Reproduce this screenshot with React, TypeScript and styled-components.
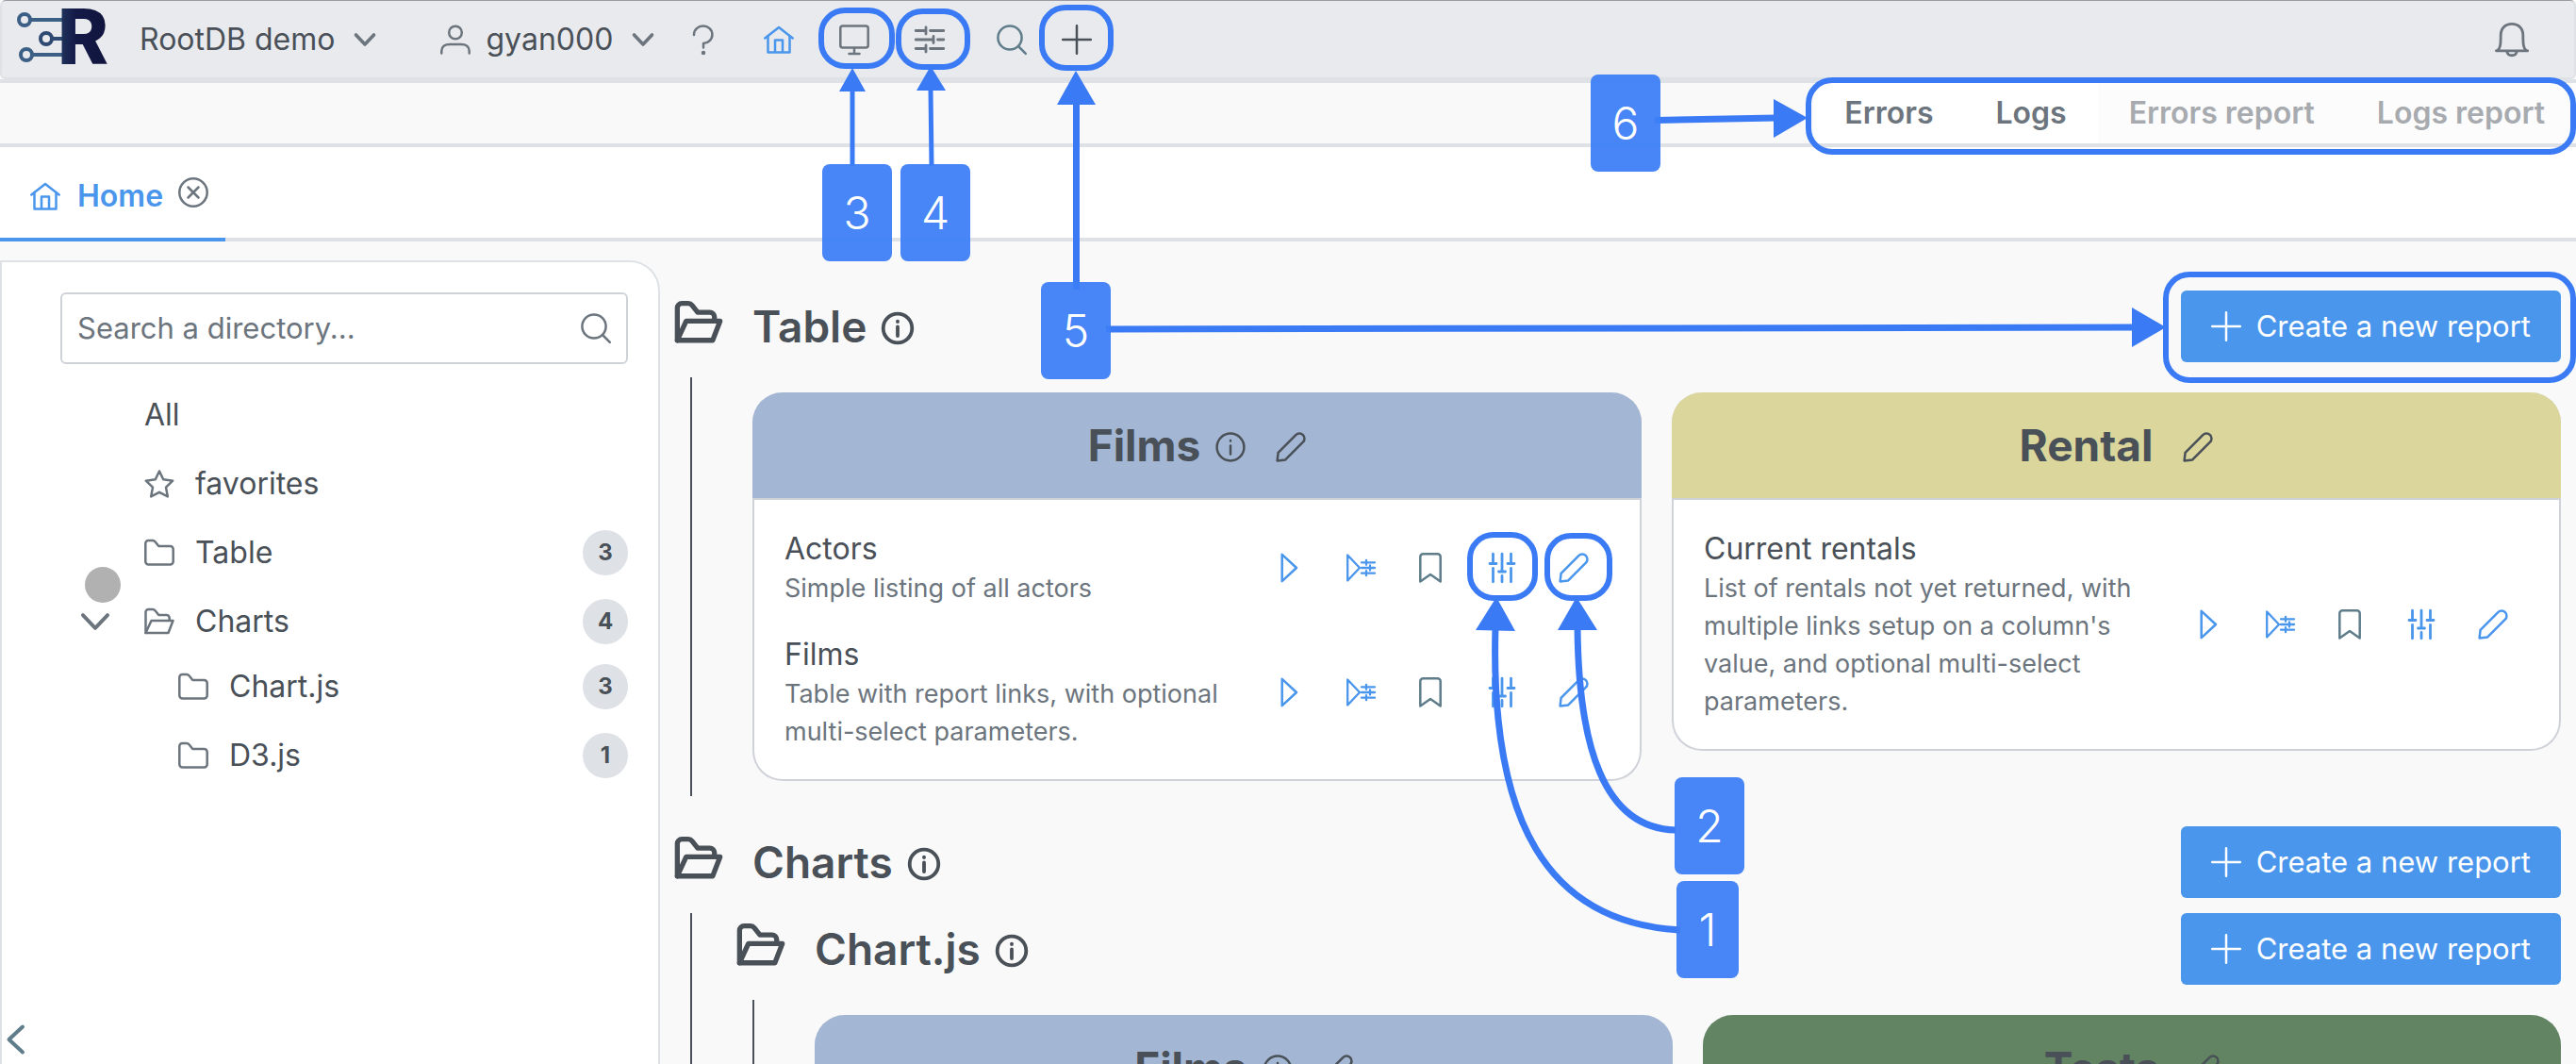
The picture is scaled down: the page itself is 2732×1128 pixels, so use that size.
import React from "react";
import styled, { createGlobalStyle, css } from "styled-components";

const color = {
  text: "#495057",
  muted: "#6c757d",
  line: "#dee2e6",
  cardLine: "#d0d2d9",
  page: "#f9f9f9",
  header: "#e9eaee",
  primary: "#4a96ec",
  note: "#3a7bf5",
  slate: "#607d8b",
};

const GlobalStyle = createGlobalStyle`
  * { box-sizing: border-box; }
  body {
    margin: 0;
    background: ${color.page};
    color: ${color.text};
    font-family: Inter, "Liberation Sans", sans-serif;
    font-size: 32px;
    line-height: 40px;
  }
  button, input { font: inherit; color: inherit; }
  button { background: none; border: 0; padding: 0; cursor: pointer; }
  ul { list-style: none; margin: 0; padding: 0; }
  h2, h3, h4, p { margin: 0; font-weight: inherit; font-size: inherit; }
`;

/* ---------- icons ---------- */

const shapes = {
  chevronDown: <path d="M6.5 11 L16 21 L25.5 11" />,
  chevronLeft: <path d="M22 2.5 L7.5 16 L22 29.5" />,
  user: (
    <>
      <circle cx="16" cy="8.5" r="6.8" />
      <path d="M1.3 30.5 V28 C1.3 23.5 4.8 21 10 21 H22 C27.2 21 30.7 23.5 30.7 28 V30.5" />
    </>
  ),
  help: (
    <>
      <path d="M6 11 V10.5 A9.7 9.3 0 1 1 16 20 V24.5" />
      <circle cx="16" cy="30" r="1" fill="currentColor" />
    </>
  ),
  home: (
    <>
      <path d="M1.3 14.5 L16 3 L30.7 14.5" />
      <path d="M4.5 12.5 V29.5 H27.5 V12.5" />
      <path d="M12 29 V16.5 H20 V29" />
    </>
  ),
  monitor: (
    <>
      <rect x="1.3" y="1.5" width="29.4" height="23" rx="2.5" />
      <path d="M16 25 V31 M10.5 31 H21.5" />
    </>
  ),
  slidersH: (
    <path d="M1.2 6.5 H12 M12 3 V10 M16.5 6.5 H30.8 M1.2 16 H20 M20 12.5 V19.5 M24.5 16 H30.8 M1.2 25.5 H12 M12 22 V29 M16.5 25.5 H30.8" />
  ),
  slidersV: (
    <path d="M6.5 1.2 V11.5 M3 11.5 H10 M6.5 16.5 V30.8 M16 1.2 V20 M12.5 20 H19.5 M16 24.5 V30.8 M25.5 1.2 V11.5 M22 11.5 H29 M25.5 16.5 V30.8" />
  ),
  search: (
    <>
      <circle cx="14" cy="14" r="12.6" />
      <path d="M23 23 L30.8 30.8" />
    </>
  ),
  plus: <path d="M16 1.2 V30.8 M1.2 16 H30.8" />,
  bell: (
    <>
      <path d="M1.2 26.5 C5.5 25.5 5.5 19 5.5 12 C5.5 5.5 9.5 1.2 16 1.2 C22.5 1.2 26.5 5.5 26.5 12 C26.5 19 26.5 25.5 30.8 26.5 Z" />
      <path d="M11.5 27.5 C12 32 20 32 20.5 27.5" />
    </>
  ),
  close: (
    <>
      <circle cx="16" cy="16" r="14.7" />
      <path d="M10.5 10.5 L21.5 21.5 M21.5 10.5 L10.5 21.5" />
    </>
  ),
  star: (
    <path d="M16 2.5 L20.2 11.3 L30.2 12.7 L23 19.6 L24.8 29.4 L16 24.8 L7.2 29.4 L9 19.6 L1.8 12.7 L11.8 11.3 Z" />
  ),
  folder: (
    <path d="M1.3 25.3 V6 A3 3 0 0 1 4.3 3 H9 C10.2 3 10.8 3.4 11.5 4.3 L15.3 9 H27.5 A3.2 3.2 0 0 1 30.7 12.2 V25.3 A3.2 3.2 0 0 1 27.5 28.5 H4.5 A3.2 3.2 0 0 1 1.3 25.3 Z" />
  ),
  folderOpen: (
    <>
      <path d="M1.5 28 V6 A3 3 0 0 1 4.5 3 H9 C10.2 3 10.8 3.4 11.5 4.3 L15.3 9 H23.5 A3.2 3.2 0 0 1 26.7 12.2 V14.5" />
      <path d="M1.5 28 L7.5 15 H30.5 L25.5 28 Z" />
    </>
  ),
  info: (
    <>
      <circle cx="16" cy="16" r="14.4" />
      <path d="M16 14.5 V23.5 M16 9 V9.4" />
    </>
  ),
  pencil: (
    <path d="M1.6 30.4 L2.6 21.8 L21.3 3.1 A5.3 5.3 0 0 1 28.9 10.7 L10.2 29.4 Z" />
  ),
  play: <path d="M10.7 1.8 L26 16 L10.7 30.2 Z" />,
  playForm: (
    <path d="M4.2 2.5 L17 16 L4.2 29.5 Z M19 10.3 H33 M19 16 H33 M19 21.7 H33 M24 7.8 V12.8 M28 13.5 V18.5 M24 19.2 V24.2" />
  ),
  bookmark: <path d="M5.3 30.5 V4.3 A3 3 0 0 1 8.3 1.3 H23.7 A3 3 0 0 1 26.7 4.3 V30.5 L16 23 Z" />,
};

const Glyph = styled.svg<{ $size: number }>`
  display: block;
  flex: none;
  width: ${(p) => p.$size}px;
  height: ${(p) => p.$size}px;
  fill: none;
  stroke: currentColor;
  stroke-linecap: round;
  stroke-linejoin: round;
  overflow: visible;
`;

function Icon({ name, size = 32, weight = 2.5 }: { name: keyof typeof shapes; size?: number; weight?: number }) {
  return (
    <Glyph viewBox="0 0 32 32" $size={size} strokeWidth={weight} aria-hidden="true">
      {shapes[name]}
    </Glyph>
  );
}

/* ---------- header ---------- */

const Header = styled.header`
  display: flex;
  align-items: center;
  height: 84px;
  padding: 0 32px 0 16px;
  background: ${color.header};
  border: 2px solid ${color.line};
  border-top: 1px solid #9b9ba3;
  border-radius: 6px;
`;

const HeaderLine = styled.div`
  height: 4px;
  background: ${color.line};
`;

const LogoArt = styled.svg`
  display: block;
  flex: none;
  width: 98px;
  height: 64px;
  margin-bottom: 8px;
  overflow: visible;
`;

const MenuButton = styled.button<{ $last?: boolean }>`
  display: flex;
  align-items: center;
  gap: 16px;
  padding: 0 ${(p) => (p.$last ? 8 : 32)}px 0 32px;
  white-space: nowrap;
  svg { color: ${color.muted}; }
`;

const NavIcons = styled.nav`
  display: flex;
  align-items: center;
`;

const NavButton = styled.button<{ $tint?: string; $narrow?: boolean }>`
  display: flex;
  justify-content: center;
  align-items: center;
  width: ${(p) => (p.$narrow ? 69 : 80)}px;
  height: 72px;
  color: ${(p) => p.$tint ?? color.muted};
`;

const NavGap = styled.span`
  width: 12px;
`;

const Spacer = styled.span`
  flex: 1;
`;

function Logo() {
  return (
    <LogoArt viewBox="0 0 98 64" role="img" aria-label="RootDB">
      <defs>
        <linearGradient id="logoInk" x1="0" x2="1">
          <stop offset="0" stopColor="#22385f" />
          <stop offset="0.35" stopColor="#141a48" />
          <stop offset="1" stopColor="#10143c" />
        </linearGradient>
      </defs>
      <g fill="none" stroke="#3c5f86" strokeWidth="4">
        <circle cx="8" cy="15" r="6" />
        <path d="M14 15 H50" />
        <circle cx="31" cy="35" r="6" stroke="#2e4a72" />
        <path d="M37 35 H50" stroke="#2e4a72" />
        <circle cx="10" cy="52" r="6" />
        <path d="M16 52 H50" />
      </g>
      <text x="43" y="62" fontFamily="Roboto, sans-serif" fontWeight="900" fontSize="84" fill="url(#logoInk)">
        R
      </text>
    </LogoArt>
  );
}

/* ---------- log bar and tabs ---------- */

const LogBar = styled.div`
  display: flex;
  justify-content: flex-end;
  height: 68px;
  border-bottom: 4px solid ${color.line};
`;

const LogButton = styled.button`
  padding: 0 33px;
  background: #fff;
  color: ${color.muted};
  font-weight: 600;
  white-space: nowrap;
  &:disabled { background: #fcfcfd; color: #a7aaae; cursor: default; }
`;

const TabBar = styled.div`
  display: flex;
  height: 100px;
  background: #fff;
  border-bottom: 4px solid ${color.line};
`;

const Tab = styled.div`
  display: flex;
  align-items: center;
  gap: 16px;
  height: 100px;
  padding: 8px 18px 0 32px;
  border-bottom: 4px solid ${color.primary};
`;

const TabLink = styled.a`
  display: flex;
  align-items: center;
  gap: 18px;
  color: ${color.primary};
  font-weight: 600;
  text-decoration: none;
`;

const TabClose = styled.button`
  color: ${color.muted};
  padding-bottom: 8px;
`;

/* ---------- sidebar ---------- */

const Workspace = styled.div`
  display: grid;
  grid-template-columns: 700px minmax(0, 1fr);
  grid-template-rows: minmax(0, 1fr);
  height: calc(100vh - 256px);
  min-height: 600px;
  padding-top: 20px;
  overflow: hidden;
`;

const Sidebar = styled.aside`
  display: flex;
  flex-direction: column;
  padding: 32px 32px 10px 62px;
  background: #fff;
  border: 2px solid ${color.line};
  border-bottom: 0;
  border-top-right-radius: 32px;
`;

const SearchBox = styled.label`
  display: flex;
  align-items: center;
  height: 76px;
  padding: 0 16px;
  border: 2px solid ${color.cardLine};
  border-radius: 6px;
  color: ${color.muted};
  background: #fff;
`;

const SearchInput = styled.input`
  flex: 1;
  min-width: 0;
  border: 0;
  padding: 0;
  outline: 0;
  background: transparent;
  font-size: 31px;
  &::placeholder { color: ${color.muted}; opacity: 1; }
`;

const Tree = styled.ul`
  display: flex;
  flex-direction: column;
  gap: 4px;
  padding-top: 19px;
`;

const SubTree = styled.ul`
  display: flex;
  flex-direction: column;
  gap: 4px;
`;

const TreeRow = styled.div<{ $level?: number }>`
  display: flex;
  align-items: center;
  height: 69px;
  padding-left: ${(p) => (p.$level ? 36 : 0)}px;
  color: ${color.text};
  > svg { color: ${color.muted}; margin-right: 22px; }
`;

const Toggle = styled.button<{ $blank?: boolean }>`
  position: relative;
  display: flex;
  justify-content: center;
  width: 73px;
  margin-right: 16px;
  color: ${color.muted};
  ${(p) => p.$blank && css`visibility: hidden;`}
`;

const TouchDot = styled.span`
  position: absolute;
  left: 26px;
  bottom: 42px;
  width: 38px;
  height: 38px;
  border-radius: 50%;
  background: #b1b1b1;
`;

const Count = styled.span`
  width: 48px;
  height: 48px;
  margin-left: auto;
  border-radius: 24px;
  background: ${color.line};
  font-size: 24px;
  font-weight: 700;
  line-height: 48px;
  text-align: center;
`;

const Collapse = styled.button`
  margin: auto auto 0 -62px;
  color: ${color.slate};
`;

type NodeProps = {
  label: string;
  icon?: keyof typeof shapes;
  count?: number;
  level?: number;
  open?: boolean;
  children?: React.ReactNode;
};

function TreeNode({ label, icon, count, level, open, children }: NodeProps) {
  return (
    <li>
      <TreeRow $level={level}>
        <Toggle $blank={!open} aria-label={`Toggle ${label}`}>
          <Icon name="chevronDown" size={44} weight={2.8} />
          {open && <TouchDot />}
        </Toggle>
        {icon && <Icon name={icon} />}
        {label}
        {count !== undefined && <Count>{count}</Count>}
      </TreeRow>
      {children && <SubTree>{children}</SubTree>}
    </li>
  );
}

/* ---------- directory sections ---------- */

const Main = styled.main`
  display: flex;
  flex-direction: column;
  gap: 32px;
  padding: 32px 16px 0 16px;
`;

const SectionHead = styled.div`
  display: flex;
  align-items: center;
  height: 76px;
  margin-bottom: 16px;
`;

const SectionIcon = styled.span`
  width: 82px;
  padding-bottom: 8px;
`;

const SectionTitle = styled.h2`
  font-size: 46px;
  font-weight: 600;
  line-height: 56px;
`;

const InfoButton = styled.button`
  margin-left: 16px;
  padding-top: 4px;
`;

const CreateButton = styled.button`
  display: flex;
  align-items: center;
  gap: 16px;
  height: 76px;
  margin-left: auto;
  padding: 0 32px;
  border-radius: 6px;
  background: ${color.primary};
  color: #fff;
  font-size: 31px;
  white-space: nowrap;
`;

const SectionBody = styled.div`
  margin-left: 16px;
  padding-left: 48px;
  border-left: 2px solid ${color.text};
`;

const CardGrid = styled.div`
  display: grid;
  grid-template-columns: repeat(2, minmax(0, 1fr));
  align-items: start;
  gap: 32px;
  padding: 16px 0 16px 16px;
`;

const Card = styled.article`
  border: 2px solid ${color.cardLine};
  border-top: 0;
  border-radius: 32px;
  background: #fff;
`;

const CardHead = styled.div<{ $tone: string }>`
  display: flex;
  justify-content: center;
  align-items: center;
  height: 114px;
  margin: 0 -2px;
  border-bottom: 2px solid ${color.cardLine};
  border-radius: 32px 32px 0 0;
  background: ${(p) => p.$tone};
`;

const CardTitle = styled.h3`
  font-size: 46px;
  font-weight: 700;
  line-height: 56px;
`;

const CardHeadButton = styled.button<{ $gap: number }>`
  margin-left: ${(p) => p.$gap}px;
  padding-top: 4px;
`;

const ReportList = styled.ul`
  display: flex;
  flex-direction: column;
  gap: 28px;
  padding: 30px 32px;
`;

const Report = styled.li`
  display: flex;
  align-items: center;
`;

const ReportText = styled.div`
  flex: 1;
  min-width: 0;
  padding-right: 24px;
`;

const ReportName = styled.h4`
  line-height: 44px;
`;

const ReportNote = styled.p`
  color: ${color.muted};
  font-size: 27px;
  line-height: 40px;
`;

const Action = styled.button<{ $quiet?: boolean }>`
  display: flex;
  justify-content: center;
  width: 76px;
  color: ${(p) => (p.$quiet ? color.slate : color.primary)};
`;

function ReportItem({ name, note }: { name: string; note: string }) {
  return (
    <Report>
      <ReportText>
        <ReportName>{name}</ReportName>
        <ReportNote>{note}</ReportNote>
      </ReportText>
      <Action aria-label={`Run ${name}`}><Icon name="play" /></Action>
      <Action aria-label={`Run ${name} with parameters`}><Icon name="playForm" weight={2.3} /></Action>
      <Action $quiet aria-label={`Bookmark ${name}`}><Icon name="bookmark" /></Action>
      <Action aria-label={`Configure ${name}`}><Icon name="slidersV" weight={2.8} /></Action>
      <Action aria-label={`Edit ${name}`}><Icon name="pencil" /></Action>
    </Report>
  );
}

type ReportEntry = { name: string; note: string };

type ReportCardProps = { title: string; tone: string; info?: boolean; reports: ReportEntry[] };

function ReportCard({ title, tone, info, reports }: ReportCardProps) {
  return (
    <Card>
      <CardHead $tone={tone}>
        <CardTitle>{title}</CardTitle>
        {info && <CardHeadButton $gap={16} aria-label={`About ${title}`}><Icon name="info" /></CardHeadButton>}
        <CardHeadButton $gap={32} aria-label={`Edit ${title}`}><Icon name="pencil" /></CardHeadButton>
      </CardHead>
      <ReportList>
        {reports.map((r) => <ReportItem key={r.name} {...r} />)}
      </ReportList>
    </Card>
  );
}

function Directory({ title, children }: { title: string; children: React.ReactNode }) {
  return (
    <section>
      <SectionHead>
        <SectionIcon><Icon name="folderOpen" size={50} weight={3.4} /></SectionIcon>
        <SectionTitle>{title}</SectionTitle>
        <InfoButton aria-label={`About ${title}`}><Icon name="info" size={34} weight={3.6} /></InfoButton>
        <CreateButton>
          <Icon name="plus" />
          Create a new report
        </CreateButton>
      </SectionHead>
      <SectionBody>{children}</SectionBody>
    </section>
  );
}

/* ---------- numbered callouts drawn over the page ---------- */

const Page = styled.div`
  position: relative;
  overflow: hidden;
`;

const Callouts = styled.div`
  position: absolute;
  inset: 0;
  pointer-events: none;
`;

const Arrows = styled.svg`
  position: absolute;
  top: 0;
  left: 0;
  width: 2732px;
  height: 1128px;
`;

const Marker = styled.span<{ $x: number; $y: number; $w?: number }>`
  position: absolute;
  left: ${(p) => p.$x}px;
  top: ${(p) => p.$y}px;
  width: ${(p) => p.$w ?? 74}px;
  height: 103px;
  border-radius: 8px;
  background: rgba(61, 126, 247, 0.94);
  color: #fff;
  font-size: 48px;
  font-weight: 300;
  line-height: 103px;
  text-align: center;
`;

const rings = [
  [871, 11, 75, 59],
  [953, 12, 73, 59],
  [1105, 8, 73, 64],
  [1918, 85, 811, 76],
  [2297, 291, 432, 112],
  [1559, 567, 69, 67],
  [1641, 568, 66, 66],
];

function CalloutLayer() {
  return (
    <Callouts>
      <Arrows viewBox="0 0 2732 1128" aria-hidden="true">
        <g fill="none" stroke={color.note} strokeWidth="6">
          {rings.map(([x, y, w, h]) => <rect key={x} x={x} y={y} width={w} height={h} rx="25" />)}
        </g>
        <g fill="none" stroke={color.note}>
          <path strokeWidth="5" d="M904 176 V94 M988 176 L987 94" />
          <path strokeWidth="7" d="M1141.5 307 V108 M1173 349 L2264 347" />
          <path strokeWidth="7" d="M1755 127.5 L1884 125" />
          <path strokeWidth="7" d="M1782 986 C1640 978 1580 870 1586 664" />
          <path strokeWidth="7" d="M1777 880 C1700 878 1674 790 1673 664" />
        </g>
        <g fill={color.note}>
          <path d="M904 72 L918 97 H890 Z" />
          <path d="M987 70 L1003 96 H972 Z" />
          <path d="M1141 75 L1162 111 H1121 Z" />
          <path d="M2297 347 L2261 326 V368 Z" />
          <path d="M1917 125 L1881 105 V146 Z" />
          <path d="M1587 633 L1607 669 L1565 668 Z" />
          <path d="M1672 633 L1694 668 H1652 Z" />
        </g>
      </Arrows>
      <Marker $x={872} $y={174}>3</Marker>
      <Marker $x={955} $y={174}>4</Marker>
      <Marker $x={1104} $y={299}>5</Marker>
      <Marker $x={1687} $y={79}>6</Marker>
      <Marker $x={1776} $y={824}>2</Marker>
      <Marker $x={1778} $y={934} $w={66}>1</Marker>
    </Callouts>
  );
}

/* ---------- page ---------- */

const filmReports: ReportEntry[] = [
  { name: "Actors", note: "Simple listing of all actors" },
  { name: "Films", note: "Table with report links, with optional multi-select parameters." },
];

const rentalReports: ReportEntry[] = [
  {
    name: "Current rentals",
    note: "List of rentals not yet returned, with multiple links setup on a column's value, and optional multi-select parameters.",
  },
];

export default function App() {
  return (
    <Page>
      <GlobalStyle />
      <Header>
        <Logo />
        <MenuButton>RootDB demo <Icon name="chevronDown" weight={3.6} /></MenuButton>
        <MenuButton $last><Icon name="user" /> gyan000 <Icon name="chevronDown" weight={3.6} /></MenuButton>
        <NavIcons aria-label="Main">
          <NavButton aria-label="Help"><Icon name="help" /></NavButton>
          <NavButton aria-label="Home" $tint={color.primary}><Icon name="home" /></NavButton>
          <NavButton aria-label="Display"><Icon name="monitor" /></NavButton>
          <NavButton aria-label="Settings"><Icon name="slidersH" weight={2.8} /></NavButton>
          <NavGap />
          <NavButton $narrow aria-label="Search" $tint={color.slate}><Icon name="search" /></NavButton>
          <NavButton $narrow aria-label="Add" $tint={color.text}><Icon name="plus" /></NavButton>
        </NavIcons>
        <Spacer />
        <NavButton $narrow aria-label="Notifications"><Icon name="bell" size={36} /></NavButton>
      </Header>
      <HeaderLine />
      <LogBar>
        <LogButton>Errors</LogButton>
        <LogButton>Logs</LogButton>
        <LogButton disabled>Errors report</LogButton>
        <LogButton disabled>Logs report</LogButton>
      </LogBar>
      <TabBar>
        <Tab>
          <TabLink href="#home"><Icon name="home" /> Home</TabLink>
          <TabClose aria-label="Close Home"><Icon name="close" /></TabClose>
        </Tab>
      </TabBar>
      <Workspace>
        <Sidebar>
          <SearchBox>
            <SearchInput type="text" placeholder="Search a directory..." aria-label="Search a directory" />
            <Icon name="search" />
          </SearchBox>
          <Tree>
            <TreeNode label="All" />
            <TreeNode label="favorites" icon="star" />
            <TreeNode label="Table" icon="folder" count={3} />
            <TreeNode label="Charts" icon="folderOpen" count={4} open>
              <TreeNode label="Chart.js" icon="folder" count={3} level={1} />
              <TreeNode label="D3.js" icon="folder" count={1} level={1} />
            </TreeNode>
          </Tree>
          <Collapse aria-label="Collapse panel"><Icon name="chevronLeft" weight={4} /></Collapse>
        </Sidebar>
        <Main>
          <Directory title="Table">
            <CardGrid>
              <ReportCard title="Films" tone="#a3b6d3" info reports={filmReports} />
              <ReportCard title="Rental" tone="#dad69c" reports={rentalReports} />
            </CardGrid>
          </Directory>
          <Directory title="Charts">
            <Directory title="Chart.js">
              <CardGrid>
                <ReportCard title="Films" tone="#a3b6d3" info reports={filmReports} />
                <ReportCard title="Tests" tone="#628463" reports={rentalReports} />
              </CardGrid>
            </Directory>
          </Directory>
        </Main>
      </Workspace>
      <CalloutLayer />
    </Page>
  );
}
